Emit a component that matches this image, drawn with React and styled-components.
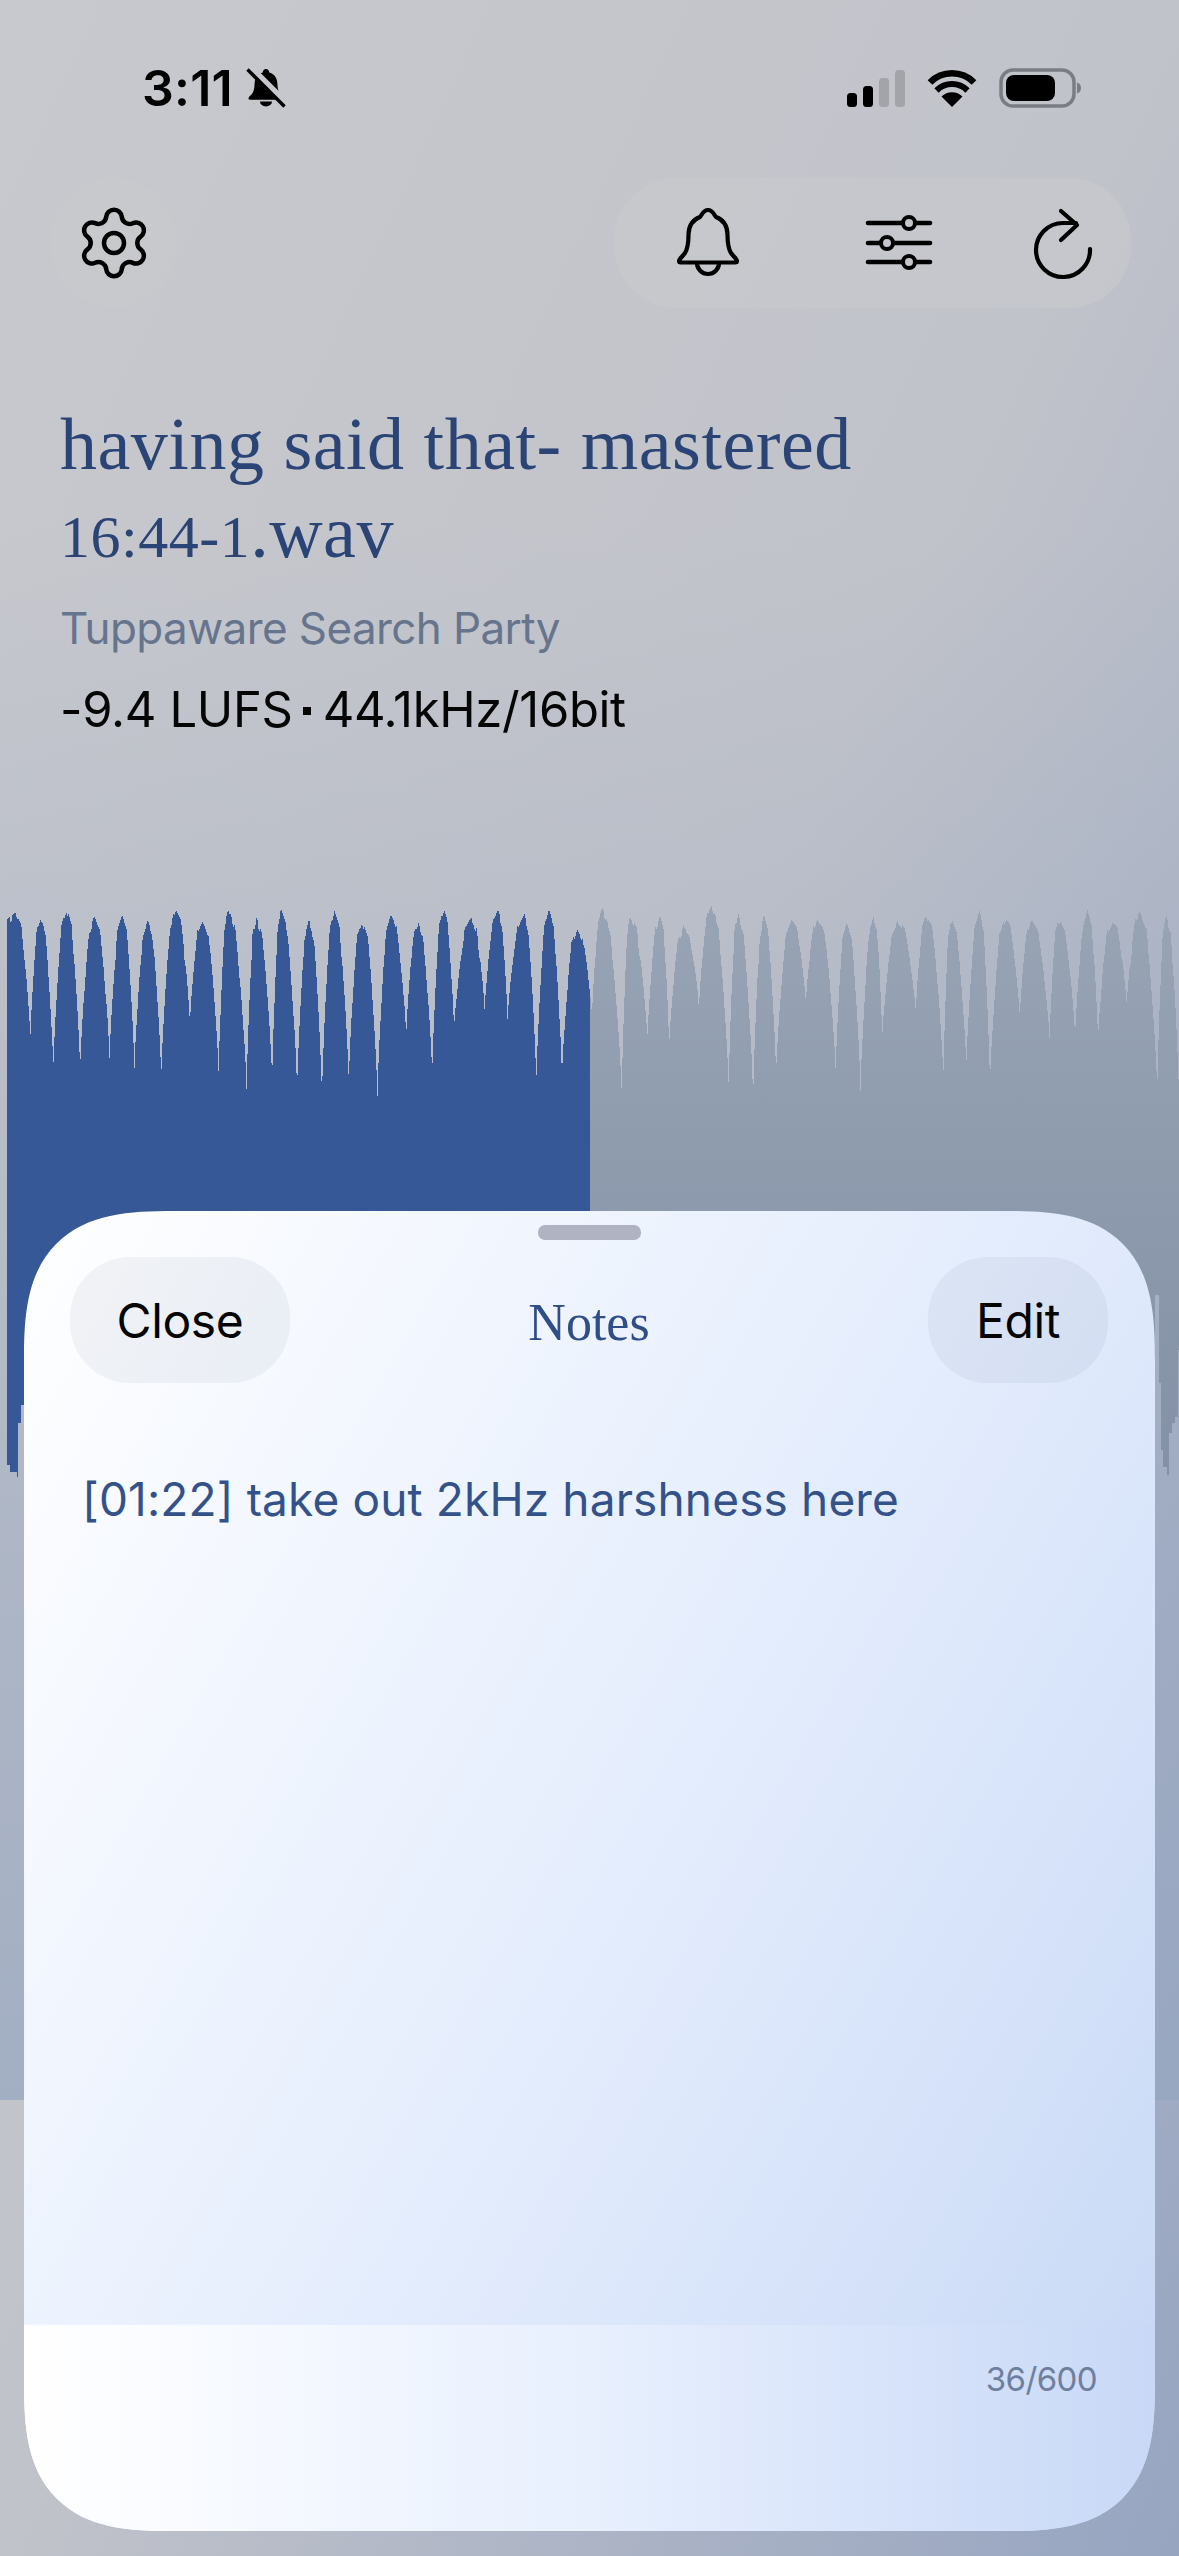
import React from 'react'
import styled, { createGlobalStyle } from 'styled-components'
import { Settings } from 'lucide-react'

const Global = createGlobalStyle`
  html, body { margin: 0; padding: 0; }
  body { font-family: Inter, "Liberation Sans", sans-serif; background: #c1c3ca; }
`

// waveform read off the reference: [x, y] of each valley and peak, in crop coords
const playedValleys = [[78,480],[138,578],[208,580],[285,545],[350,575],[420,600],[495,440],[570,595],[643,635],[710,612],[775,635],[840,655],[910,610],[985,655],[1060,475],[1128,598],[1185,455],[1265,400],[1325,430],[1400,620],[1467,600],[1545,410]]
const playedPeaks = [[40,97],[105,110],[172,82],[245,108],[318,105],[385,120],[457,85],[528,110],[595,85],[668,110],[733,85],[806,118],[872,90],[945,118],[1020,102],[1090,122],[1157,82],[1230,112],[1300,88],[1368,97],[1433,82],[1507,142]]
const restValleys = [[30,345],[108,548],[175,410],[232,425],[310,330],[388,530],[452,560],[512,500],[590,315],[668,490],[733,540],[790,405],[878,340],[950,505],[1010,475],[1072,525],[1150,355],[1228,410],[1295,400],[1355,410],[1430,320],[1510,540],[1565,500]]
const restPeaks = [[57,70],[130,88],[208,88],[270,115],[343,62],[412,82],[480,88],[553,100],[622,90],[697,108],[768,90],[832,100],[905,80],[970,95],[1045,78],[1112,92],[1180,98],[1252,98],[1328,75],[1392,100],[1465,78],[1533,88]]

const WAVE_TOP = 900

const knots = []
playedPeaks.forEach((p, i) => {
  knots.push({ x: p[0] / 2.613, y: 880 + p[1] / 3 - WAVE_TOP, peak: true })
  knots.push({ x: playedValleys[i][0] / 2.613, y: 880 + playedValleys[i][1] / 3 - WAVE_TOP, peak: false })
})
restValleys.forEach((v, i) => {
  knots.push({ x: 580 + v[0] / 2.618, y: 880 + v[1] / 2.53 - WAVE_TOP, peak: false })
  if (restPeaks[i]) knots.push({ x: 580 + restPeaks[i][0] / 2.618, y: 880 + restPeaks[i][1] / 2.53 - WAVE_TOP, peak: true })
})
knots.sort((a, b) => a.x - b.x)

let seed = 7
const rnd = () => {
  seed = (seed * 16807) % 2147483647
  return seed / 2147483647
}

// gap between spikes: thin tip, opens fast, then a narrow top with a sharp point
const spikeShape = (t) => {
  const body = Math.pow(Math.min(1, t / 0.62), 0.75)
  return body * 0.9 + 0.1 * Math.max(0, (t - 0.62) / 0.38)
}

function topAt(x) {
  if (x <= knots[0].x) return knots[0].y + (knots[0].x - x) * 0.8
  for (let i = 0; i < knots.length - 1; i++) {
    const a = knots[i]
    const b = knots[i + 1]
    if (x >= a.x && x <= b.x) {
      const v = a.peak ? b : a
      const p = a.peak ? a : b
      if (a.peak === b.peak) return a.y + (b.y - a.y) * ((x - a.x) / (b.x - a.x))
      const t = Math.abs(x - v.x) / Math.abs(p.x - v.x)
      return v.y + (p.y - v.y) * spikeShape(t)
    }
  }
  return knots[knots.length - 1].y
}

// lower edge only shows in the two strips beside the sheet
const lowerEdge = [[7,1465],[10,1472],[17,1477],[18,1423],[21,1405],[24,1398],[1155,1295],[1159,1383],[1161,1450],[1163,1467],[1167,1475],[1169,1433],[1172,1423],[1175,1417],[1178,1350]]
function bottomAt(x) {
  let y = lowerEdge[0][1]
  for (const [ex, ey] of lowerEdge) if (x >= ex) y = ey
  return y - WAVE_TOP
}

function buildPath(from, to) {
  let d = ''
  let jitter = 0
  for (let x = from; x < to; x++) {
    if (x % 2 === 0) jitter = (rnd() - 0.5) * 12
    const base = topAt(x)
    // the top of each spike is ragged, the tips of the gaps are clean
    const rag = base < 60 ? Math.max(0, jitter) : jitter * 0.3
    const y = Math.round(base + rag)
    d += d ? `V${y}H${x + 1}` : `M${x} ${y}H${x + 1}`
  }
  for (let x = to; x > from; x--) {
    d += `V${bottomAt(x - 1)}H${x - 1}`
  }
  return d + 'Z'
}

const playedPath = buildPath(7, 590)
const restPath = buildPath(590, 1179)

const Page = styled.div`
  position: relative;
  width: 1179px;
  height: 2556px;
  overflow: hidden;
  background: linear-gradient(to bottom right, #c8c9ce 0%, #c1c3ca 50%, #97a5c1 100%);
`

const Player = styled.main`
  height: 2100px;
  display: flex;
  flex-direction: column;
  background: linear-gradient(to bottom, rgba(150, 166, 192, 0) 25%, rgba(150, 166, 192, 0.72) 100%);
`

const StatusBar = styled.header`
  height: 178px;
  box-sizing: border-box;
  padding: 68px 97px 0 142px;
  display: flex;
  justify-content: space-between;
  align-items: flex-start;
`

const StatusGroup = styled.div`
  display: flex;
  align-items: center;
  gap: ${(p) => p.$gap}px;
  height: 40px;
`

const Clock = styled.span`
  font-size: 50px;
  font-weight: 600;
  line-height: 40px;
  letter-spacing: 0.2px;
  color: #000;
`

const Toolbar = styled.nav`
  height: 130px;
  padding: 0 48px 0 51px;
  display: flex;
  justify-content: space-between;
`

const ToolPill = styled.div`
  height: 130px;
  width: ${(p) => p.$width}px;
  box-sizing: border-box;
  border-radius: 62px;
  display: flex;
  align-items: center;
  justify-content: space-between;
  padding: ${(p) => p.$pad};
  background: ${(p) => p.$bg};
`

const Track = styled.section`
  padding: 92px 60px 0;
  height: 592px;
  box-sizing: border-box;
`

const Title = styled.h1`
  margin: 0;
  font-family: "Liberation Serif", serif;
  font-weight: 400;
  font-size: 74px;
  line-height: 88px;
  letter-spacing: 0.5px;
  color: #2a4475;
`

const Numerals = styled.span`
  font-size: 60px;
`

const Artist = styled.div`
  margin-top: 20px;
  font-size: 44px;
  line-height: 54px;
  letter-spacing: -0.6px;
  color: #66758d;
`

const Meta = styled.div`
  margin-top: 27px;
  font-size: 49px;
  line-height: 56px;
  letter-spacing: -0.35px;
  color: #050505;
`

const MetaDot = styled.span`
  display: inline-block;
  width: 8px;
  height: 8px;
  margin: 0 12px 12px 10px;
  background: #050505;
`

const Wave = styled.svg`
  display: block;
  width: 1179px;
  height: 600px;
`

const Sheet = styled.section`
  position: absolute;
  left: 24px;
  top: 1211px;
  width: 1131px;
  height: 1320px;
  border-radius: 150px;
  corner-shape: superellipse(1.5);
  overflow: hidden;
  display: flex;
  flex-direction: column;
  background: linear-gradient(120deg, #ffffff 0%, #e4edfd 52%, #c6d7f5 100%);
`

const Handle = styled.div`
  width: 103px;
  height: 15px;
  margin: 14px auto 0;
  border-radius: 7px;
  background: #b0b4c2;
`

const SheetHeader = styled.div`
  margin-top: 17px;
  padding: 0 47px 0 46px;
  display: grid;
  grid-template-columns: 1fr auto 1fr;
  align-items: center;
`

const PillButton = styled.button`
  justify-self: ${(p) => p.$side};
  width: ${(p) => p.$width}px;
  height: 126px;
  border: 0;
  border-radius: 60px;
  padding: 0;
  font-family: Inter, "Liberation Sans", sans-serif;
  font-size: 48px;
  letter-spacing: -0.4px;
  color: #050505;
  background: rgba(100, 110, 135, 0.075);
`

const SheetTitle = styled.h2`
  margin: 6px 0 0;
  font-family: "Liberation Serif", serif;
  font-weight: 400;
  font-size: 52px;
  line-height: 60px;
  color: #2f4d87;
`

const NoteBody = styled.div`
  flex: 1;
  padding: 88px 58px 0;
  font-size: 46px;
  line-height: 56px;
  letter-spacing: 0.14px;
  color: #33528a;
`

const SheetFooter = styled.footer`
  height: 206px;
  box-sizing: border-box;
  padding: 34px 58px 0 0;
  display: flex;
  justify-content: flex-end;
  background: linear-gradient(90deg, #ffffff 0%, #e8f0fe 50%, #c8d8f6 100%);
`

const Counter = styled.span`
  font-size: 33px;
  line-height: 40px;
  letter-spacing: -0.6px;
  color: #6f7f9e;
`

const BellSlash = () => (
  <svg width="40" height="40" viewBox="0 0 40 40">
    <path d="M20 1c-2 0-3 1.500-3.300 3.500C11 6 8.500 11 8.500 17c0 4-1 7-3 9.500C4 28 2.500 29 2.500 30.500c0 .8.500 1.200 1.500 1.200h32c1 0 1.500-.4 1.500-1.200 0-1.500-1.500-2.500-3-4-2-2.500-3-5.500-3-9.500 0-6-2.500-11-8.200-12.500C23 2.500 22 1 20 1z" fill="#000" />
    <path d="M14 33.500h12a6 5 0 0 1-12 0z" fill="#000" />
    <path d="M3 -1L41 37" stroke="#c6c7cd" strokeWidth="8" />
    <path d="M1.500 1.500L38.500 38.500" stroke="#000" strokeWidth="3.400" />
  </svg>
)

const SignalBars = () => (
  <svg width="58" height="37" viewBox="0 0 58 37">
    <rect x="0" y="23" width="10" height="14" rx="3.500" fill="#000" />
    <rect x="16" y="16" width="10" height="21" rx="3.500" fill="#000" />
    <rect x="32" y="8" width="10" height="29" rx="3.500" fill="#a2a4aa" />
    <rect x="48" y="0" width="10" height="37" rx="3.500" fill="#a2a4aa" />
  </svg>
)

const WifiIcon = () => (
  <svg width="50" height="37" viewBox="0 0 50 37">
    <path d="M25 37L14.500 26.500A15 15 0 0 1 35.500 26.500Z" fill="#000" />
    <path d="M9.500 20.500A22 22 0 0 1 40.500 20.500" fill="none" stroke="#000" strokeWidth="6" />
    <path d="M3 12.500A31 31 0 0 1 47 12.500" fill="none" stroke="#000" strokeWidth="6.500" />
  </svg>
)

const BatteryIcon = () => (
  <svg width="83" height="40" viewBox="0 0 83 40">
    <rect x="2" y="2" width="73" height="36" rx="12" fill="none" stroke="#7b7d85" strokeWidth="3.500" />
    <rect x="7" y="7" width="49" height="26" rx="8" fill="#000" />
    <path d="M78 14.500c2.500.5 4 2.500 4 5.500s-1.500 5-4 5.500z" fill="#7b7d85" />
  </svg>
)

const BellIcon = () => (
  <svg width="66" height="72" viewBox="0 0 66 72" fill="none" stroke="#000" strokeWidth="4.200" strokeLinejoin="round">
    <path d="M33 3C28 3 27 8 25 10C17 13 13.500 20 13.500 28C13.500 36 13 41 10 46C8 49 4 52 4 54C4 55 5 55.500 6 55.500H60C61 55.500 62 55 62 54C62 52 58 49 56 46C53 41 52.500 36 52.500 28C52.500 20 49 13 41 10C39 8 38 3 33 3Z" />
    <path d="M22 56A11 11 0 0 0 44 56" />
  </svg>
)

const SlidersIcon = () => (
  <svg width="105" height="68" viewBox="-27 0 105 68" fill="#c3c5ca" stroke="#000">
    <g strokeWidth="4.600" strokeLinecap="round">
      <path d="M8 14H70" />
      <path d="M8 34H70" />
      <path d="M8 53H70" />
    </g>
    <g strokeWidth="4">
      <circle cx="49" cy="14" r="6" />
      <circle cx="27" cy="34" r="6" />
      <circle cx="49" cy="53" r="6" />
    </g>
  </svg>
)

const RotateIcon = () => (
  <svg width="66" height="76" viewBox="0 0 66 76" fill="none" stroke="#000" strokeWidth="4.200" strokeLinecap="round" strokeLinejoin="round">
    <path d="M60 44A27 27 0 1 1 33 18H46" />
    <path d="M31 6L47 20L31 35" />
  </svg>
)

export default function App() {
  return (
    <Page>
      <Global />
      <Player>
        <StatusBar>
          <StatusGroup $gap={13}>
            <Clock>3:11</Clock>
            <BellSlash />
          </StatusGroup>
          <StatusGroup $gap={22}>
            <SignalBars />
            <WifiIcon />
            <BatteryIcon />
          </StatusGroup>
        </StatusBar>
        <Toolbar>
          <ToolPill $width={126} $pad="0 0 0 23px" $bg="rgba(200, 202, 204, 0.35)">
            <Settings size={80} strokeWidth={1.35} color="#000" />
          </ToolPill>
          <ToolPill $width={517} $pad="0 35px 0 61px" $bg="rgba(200, 202, 204, 0.65)">
            <BellIcon />
            <SlidersIcon />
            <RotateIcon />
          </ToolPill>
        </Toolbar>
        <Track>
          <Title>having said that- mastered<br /><Numerals>16:44-1</Numerals>.wav</Title>
          <Artist>Tuppaware Search Party</Artist>
          <Meta>-9.4 LUFS<MetaDot />44.1kHz/16bit</Meta>
        </Track>
        <Wave viewBox="0 0 1179 600">
          <defs>
            <linearGradient id="restFill" x1="0" y1="0" x2="0" y2="1">
              <stop offset="0" stopColor="#98a4b4" />
              <stop offset="1" stopColor="#8391a6" />
            </linearGradient>
          </defs>
          <path d={playedPath} fill="#365896" shapeRendering="crispEdges" />
          <path d={restPath} fill="url(#restFill)" shapeRendering="crispEdges" />
        </Wave>
      </Player>
      <Sheet>
        <Handle />
        <SheetHeader>
          <PillButton $width={220} $side="start">Close</PillButton>
          <SheetTitle>Notes</SheetTitle>
          <PillButton $width={180} $side="end">Edit</PillButton>
        </SheetHeader>
        <NoteBody>[01:22] take out 2kHz harshness here</NoteBody>
        <SheetFooter>
          <Counter>36/600</Counter>
        </SheetFooter>
      </Sheet>
    </Page>
  )
}
